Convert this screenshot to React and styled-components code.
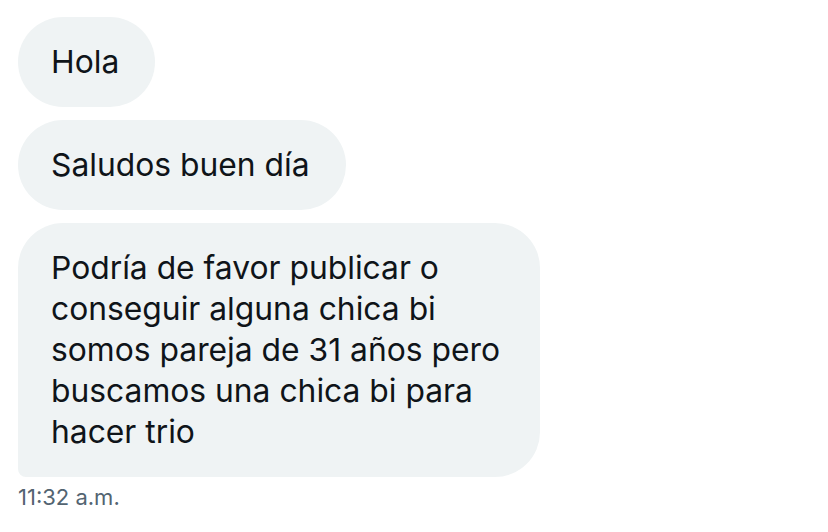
import React from 'react'
import styled, { createGlobalStyle } from 'styled-components'

const GlobalStyle = createGlobalStyle`
  html, body {
    margin: 0;
    padding: 0;
    background: #ffffff;
  }
  body {
    font-family: Inter, "Noto Sans", "Liberation Sans", sans-serif;
    -webkit-font-smoothing: antialiased;
  }
`

const Thread = styled.div`
  display: flex;
  flex-direction: column;
  align-items: flex-start;
  gap: 13px;
  padding: 17px 18px;
`

const Bubble = styled.div`
  box-sizing: border-box;
  width: fit-content;
  max-width: 522px;
  padding: 24px 36px 25px 33px;
  background: #eff3f4;
  color: #0f1419;
  font-size: 31.8px;
  line-height: 41px;
  border-radius: 45px;
  border-bottom-left-radius: ${p => (p.$last ? '8px' : '45px')};
`

const Time = styled.div`
  margin-top: -5px;
  color: #536471;
  font-size: 22px;
  line-height: 24px;
  letter-spacing: 0;
`

const messages = [
  'Hola',
  'Saludos buen día',
  'Podría de favor publicar o conseguir alguna chica bi somos pareja de 31 años pero buscamos una chica bi para hacer trio',
]

export default function App() {
  return (
    <>
      <GlobalStyle />
      <Thread>
        {messages.map((m, i) => (
          <Bubble key={i} $last={i === messages.length - 1}>
            {m}
          </Bubble>
        ))}
        <Time>11:32 a.m.</Time>
      </Thread>
    </>
  )
}
